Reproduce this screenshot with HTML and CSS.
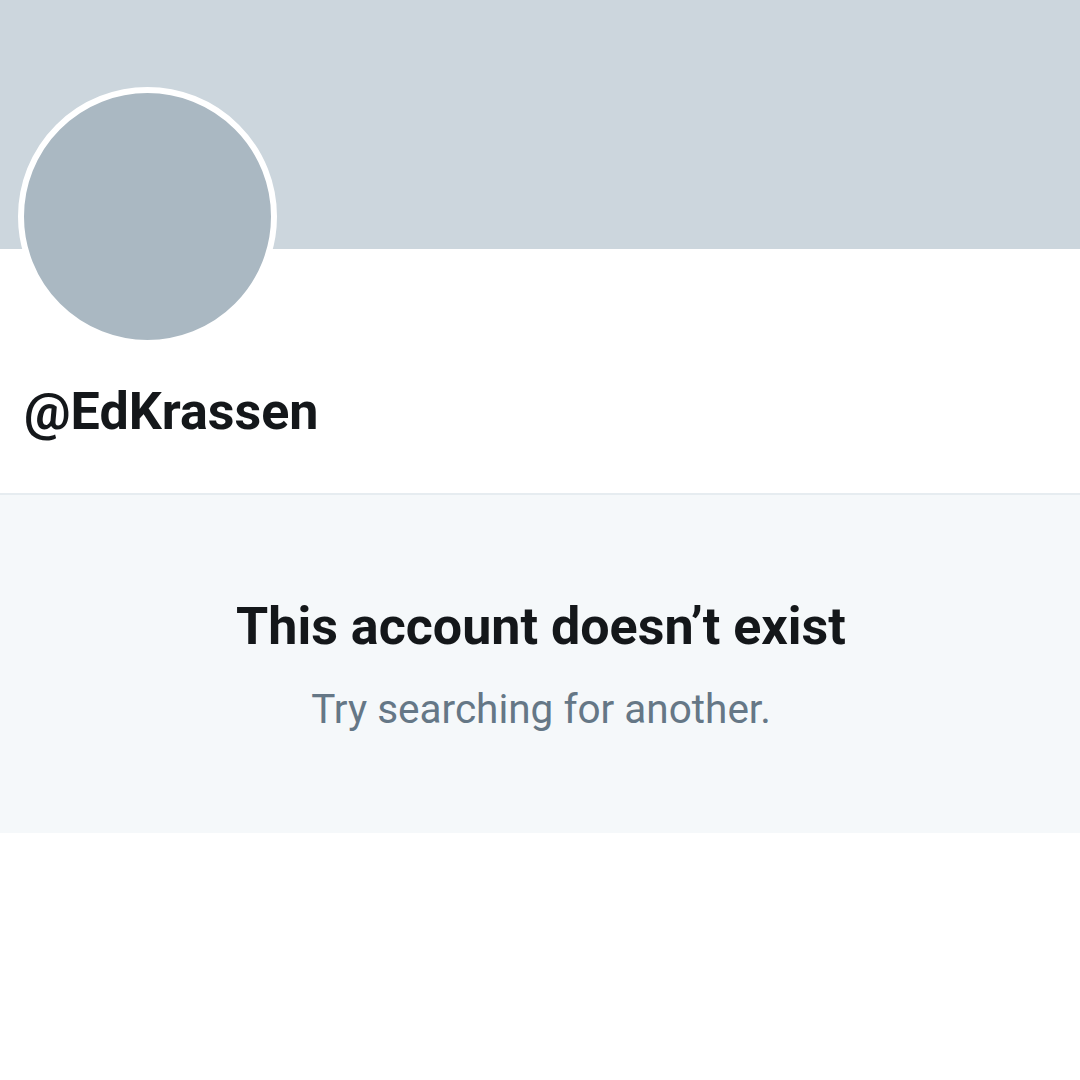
FILE: index.html
```html
<!DOCTYPE html>
<html lang="en">
<head>
    <meta charset="UTF-8">
    <meta name="viewport" content="width=device-width, initial-scale=1.0">
    <title>@EdKrassen</title>
    <link rel="stylesheet" href="styles.css">
</head>
<body>
    <div class="profile">
        <div class="banner"></div>
        <div class="profile-info">
            <div class="avatar"></div>
            <h1 class="handle">@EdKrassen</h1>
        </div>
    </div>

    <div class="empty-state">
        <h2>This account doesn’t exist</h2>
        <p>Try searching for another.</p>
    </div>
</body>
</html>
```

FILE: styles.css
```css
/* General Reset */
* {
    margin: 0;
    padding: 0;
    box-sizing: border-box;
}

body {
    font-family: Roboto, 'Noto Sans', sans-serif;
    background: #ffffff;
    color: #14171a;
    width: 1080px;
    height: 1080px;
    overflow: hidden;
}

/* Banner */
.banner {
    height: 249px;
    background-color: #ccd6dd;
}

/* Avatar + handle */
.profile-info {
    display: flex;
    flex-direction: column;
    align-items: flex-start;
    padding: 0 24px;
    height: 244px;
}

.avatar {
    width: 259px;
    height: 259px;
    margin-top: -162px;
    margin-left: -6px;
    border-radius: 50%;
    background-color: #aab8c2;
    border: 6px solid #ffffff;
    flex-shrink: 0;
}

.handle {
    font-size: 52px;
    font-weight: 700;
    line-height: 1;
    margin-top: 40px;
    color: #14171a;
}

/* Empty state */
.empty-state {
    background-color: #f5f8fa;
    border-top: 2px solid #e6ecf0;
    height: 340px;
    text-align: center;
    padding-top: 101px;
    padding-left: 2px;
}

.empty-state h2 {
    font-size: 52px;
    font-weight: 700;
    line-height: 1.2;
    color: #14171a;
}

.empty-state p {
    font-size: 40.5px;
    color: #657786;
    margin-top: 27px;
}
```
